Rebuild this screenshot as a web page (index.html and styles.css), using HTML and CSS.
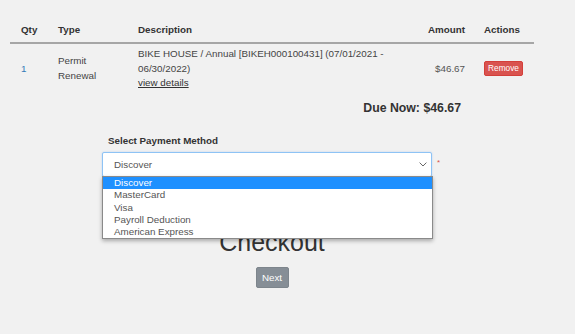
FILE: index.html
```html
<!DOCTYPE html>
<html lang="en">
<head>
<meta charset="utf-8">
<title>Checkout</title>
<link rel="stylesheet" href="styles.css">
</head>
<body>
<div class="page">
  <div class="cart">
    <div class="grid head">
      <div class="cell">Qty</div>
      <div class="cell">Type</div>
      <div class="cell">Description</div>
      <div class="cell amount">Amount</div>
      <div class="cell">Actions</div>
    </div>
    <div class="grid row">
      <div class="cell qty">1</div>
      <div class="cell">Permit<br>Renewal</div>
      <div class="cell desc">
        <span class="desc-text">BIKE HOUSE / Annual [BIKEH000100431] (07/01/2021 - 06/30/2022)</span>
        <a class="details" href="#">view details</a>
      </div>
      <div class="cell amount">$46.67</div>
      <div class="cell"><button class="btn-remove" type="button">Remove</button></div>
    </div>
    <div class="due">Due Now: $46.67</div>
  </div>

  <div class="payment">
    <div class="pm-label">Select Payment Method</div>
    <div class="select-wrap">
      <div class="select-row">
        <div class="select">
          <span>Discover</span>
          <svg class="chev" width="8" height="5" viewBox="0 0 8 5"><path d="M0.6 0.6 L4 4 L7.4 0.6" fill="none" stroke="#666" stroke-width="1"/></svg>
        </div>
        <span class="req">*</span>
      </div>
      <ul class="options">
        <li class="active">Discover</li>
        <li>MasterCard</li>
        <li>Visa</li>
        <li>Payroll Deduction</li>
        <li>American Express</li>
      </ul>
    </div>
  </div>

  <h1 class="checkout">Checkout</h1>
  <div class="actions"><button class="btn-next" type="button">Next</button></div>
</div>
</body>
</html>
```
FILE: styles.css
```css
html, body {
  margin: 0;
  padding: 0;
  background: #f1f1f1;
}
body {
  font-family: "Liberation Sans", Arial, sans-serif;
  font-size: 9.8px;
  color: #333;
  padding-top: 18px;
}
.page {
  width: 524px;
  margin-left: 10px;
}
.grid {
  display: grid;
  grid-template-columns: 37px 80px 280px 66px 61px;
  align-items: center;
  line-height: 14.5px;
}
.cell {
  padding-left: 11px;
}
.head {
  font-weight: bold;
  padding: 5px 0 4.5px;
  border-bottom: 2px solid #a6a6a6;
}
.amount {
  text-align: right;
  padding-right: 8px;
}
.row {
  padding-top: 3px;
  color: #444;
}
.qty {
  color: #337ab7;
}
.desc-text {
  display: block;
}
.details {
  color: #333;
  text-decoration: underline;
}
.row .amount {
  color: #555;
}
.btn-remove {
  font-family: "Liberation Sans", Arial, sans-serif;
  font-size: 8.3px;
  line-height: 11px;
  color: #fff;
  background: #d9534f;
  border: 1px solid #d43f3a;
  border-radius: 2px;
  padding: 1px 3px;
  margin: 0;
  width: 39px;
}
.due {
  margin-top: 10px;
  text-align: right;
  padding-right: 73px;
  font-weight: bold;
  font-size: 12.3px;
  line-height: 14px;
  color: #333;
}
.payment {
  margin-left: 92px;
  margin-top: 19px;
}
.pm-label {
  font-weight: bold;
  padding-left: 6px;
  line-height: 14.5px;
  margin-bottom: 4px;
}
.select-wrap {
  position: relative;
}
.select-row {
  display: flex;
  align-items: flex-start;
}
.select {
  box-sizing: border-box;
  width: 330px;
  height: 25px;
  background: #fff;
  border: 1px solid #8ec3f5;
  border-radius: 2px;
  box-shadow: 0 0 2px rgba(80, 150, 230, 0.35);
  display: flex;
  align-items: center;
  justify-content: space-between;
  padding: 0 4px 0 11px;
  color: #555;
}
.chev {
  display: block;
}
.req {
  color: #d9534f;
  font-size: 8px;
  line-height: 8px;
  margin-left: 5px;
  margin-top: 7px;
}
.options {
  position: absolute;
  left: 0;
  top: 24px;
  width: 331px;
  box-sizing: border-box;
  margin: 0;
  padding: 0;
  list-style: none;
  background: #fff;
  border: 1px solid #8a8a8a;
  box-shadow: 0 2px 4px rgba(0, 0, 0, 0.3);
  color: #555;
  z-index: 2;
}
.options li {
  height: 12.3px;
  line-height: 12.3px;
  padding-left: 11px;
}
.options li.active {
  background: #1e90ff;
  color: #fff;
}
.checkout {
  margin: 51px 0 0;
  font-size: 25px;
  line-height: 28.75px;
  font-weight: normal;
  text-align: center;
  color: #333;
}
.actions {
  display: flex;
  justify-content: center;
  margin-top: 10px;
}
.btn-next {
  font-family: "Liberation Sans", Arial, sans-serif;
  font-size: 9.8px;
  color: #fff;
  background: #868e96;
  border: 1px solid #7d858c;
  border-radius: 2px;
  width: 33px;
  height: 21px;
  padding: 0;
  margin: 0;
}
```
